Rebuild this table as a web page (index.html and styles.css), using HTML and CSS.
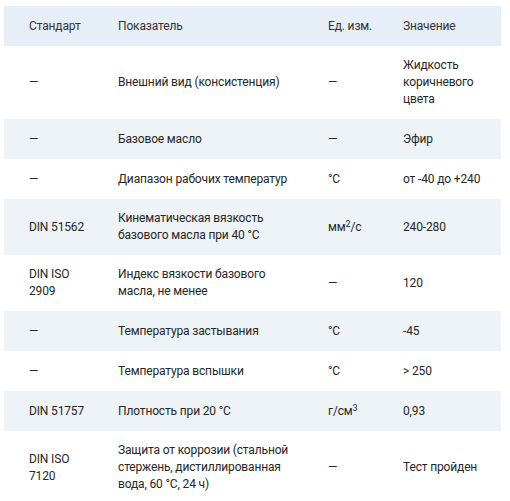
FILE: index.html
```html
<!DOCTYPE html>
<html lang="ru">
<head>
<meta charset="utf-8">
<link rel="stylesheet" href="styles.css">
</head>
<body>
<table class="spec">
  <colgroup>
    <col class="c1"><col class="c2"><col class="c3"><col class="c4">
  </colgroup>
  <thead>
    <tr><th>Стандарт</th><th>Показатель</th><th>Ед. изм.</th><th>Значение</th></tr>
  </thead>
  <tbody>
    <tr><td>—</td><td>Внешний вид (консистенция)</td><td>—</td><td>Жидкость коричневого цвета</td></tr>
    <tr class="alt"><td>—</td><td>Базовое масло</td><td>—</td><td>Эфир</td></tr>
    <tr><td>—</td><td>Диапазон рабочих температур</td><td>°C</td><td>от -40 до +240</td></tr>
    <tr class="alt"><td>DIN 51562</td><td>Кинематическая вязкость базового масла при 40 °C</td><td>мм<sup>2</sup>/с</td><td>240-280</td></tr>
    <tr><td>DIN ISO 2909</td><td>Индекс вязкости базового масла, не менее</td><td>—</td><td>120</td></tr>
    <tr class="alt"><td>—</td><td>Температура застывания</td><td>°C</td><td>-45</td></tr>
    <tr><td>—</td><td>Температура вспышки</td><td>°C</td><td>&gt; 250</td></tr>
    <tr class="alt"><td>DIN 51757</td><td>Плотность при 20 °C</td><td>г/см<sup>3</sup></td><td>0,93</td></tr>
    <tr><td>DIN ISO 7120</td><td>Защита от коррозии (стальной стержень, дистиллированная вода, 60 °C, 24 ч)</td><td>—</td><td>Тест пройден</td></tr>
  </tbody>
</table>
</body>
</html>
```
FILE: styles.css
```css
html, body {
  margin: 0;
  padding: 0;
  background: #ffffff;
}
body {
  padding: 6px 9px 0 4px;
  font-family: Roboto, "Noto Sans", sans-serif;
  font-size: 12px;
  letter-spacing: -0.15px;
  line-height: 17px;
  color: #262626;
}
.spec {
  width: 497px;
  border-collapse: collapse;
  table-layout: fixed;
}
.c1 { width: 89px; }
.c2 { width: 210px; }
.c3 { width: 75px; }
.c4 { width: 123px; }
.spec th {
  background: #e6eef8;
  font-weight: 400;
  color: #333;
  text-align: left;
  height: 40px;
  padding: 0 0 0 25px;
  vertical-align: middle;
}
.spec td {
  padding: 11px 0 11px 25px;
  vertical-align: middle;
  text-align: left;
}
.spec th:nth-child(2), .spec td:nth-child(2) { padding-right: 10px; }
.spec tr.alt td { background: #eef3f7; }
.spec tbody tr { height: 40px; }
sup {
  font-size: 9px;
  line-height: 0;
  vertical-align: 4px;
}
```
